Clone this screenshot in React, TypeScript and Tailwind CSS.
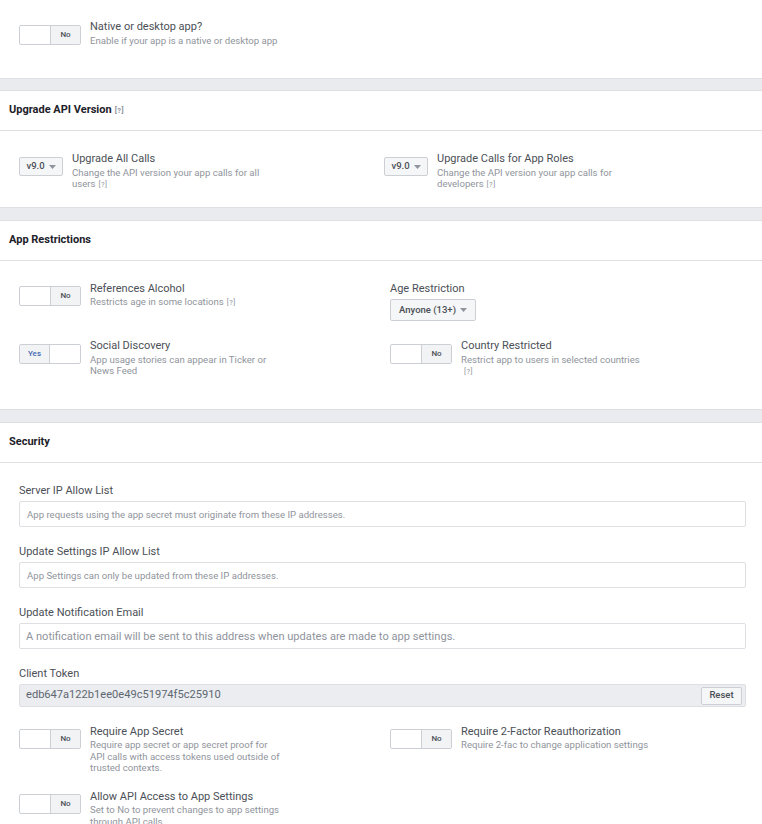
import React from "react";

function Toggle({ on }: { on?: boolean }) {
  return (
    <div className="flex h-[20px] w-[62px] shrink-0 overflow-hidden rounded-[2px] border border-[#ccd0d5] bg-white">
      {on ? (
        <>
          <div className="flex w-1/2 items-center justify-center border-r border-[#ccd0d5] bg-[#f2f3f5] text-[8px] font-medium text-[#4267b2]">
            Yes
          </div>
          <div className="w-1/2" />
        </>
      ) : (
        <>
          <div className="w-1/2" />
          <div className="flex w-1/2 items-center justify-center border-l border-[#ccd0d5] bg-[#f2f3f5] text-[8px] font-medium text-[#4b4f56]">
            No
          </div>
        </>
      )}
    </div>
  );
}

function Q() {
  return <span className="ml-[3px] inline-block text-[7.5px] leading-[10px] tracking-[0.5px] text-[#90949c]">[?]</span>;
}

function Arrow() {
  return (
    <svg width="7" height="4" viewBox="0 0 7 4" className="ml-[4px]">
      <path d="M0 0 L7 0 L3.5 4 Z" fill="#90949c" />
    </svg>
  );
}

function Dropdown({ label, w, h }: { label: string; w: string; h: string }) {
  return (
    <div
      className={`flex shrink-0 items-center justify-center rounded-[2px] border border-[#ccd0d5] bg-[#f5f6f7] text-[9.5px] font-medium text-[#4b4f56] ${w} ${h}`}
    >
      {label}
      <Arrow />
    </div>
  );
}

function ToggleItem({
  on,
  title,
  sub,
}: {
  on?: boolean;
  title: string;
  sub: React.ReactNode;
}) {
  return (
    <div className="flex items-start gap-[9px]">
      <div className="mt-[4.5px]">
        <Toggle on={on} />
      </div>
      <div className="w-[190px]">
        <div className="text-[11px] leading-[13px] text-[#4b4f56]">{title}</div>
        <div className="mt-[1.5px] text-[9.6px] leading-[11.5px] text-[#90949c]">{sub}</div>
      </div>
    </div>
  );
}

function VersionItem({ title, sub }: { title: string; sub: React.ReactNode }) {
  return (
    <div className="flex items-start gap-[9px]">
      <div className="mt-[5px]">
        <Dropdown label="v9.0" w="w-[44px]" h="h-[19px]" />
      </div>
      <div className="w-[190px]">
        <div className="text-[11px] leading-[13px] text-[#4b4f56]">{title}</div>
        <div className="mt-[1.5px] text-[9.6px] leading-[11.5px] text-[#90949c]">{sub}</div>
      </div>
    </div>
  );
}

function Band() {
  return <div className="h-[13.5px] border-y border-[#dddfe2] bg-[#e9ebee]" />;
}

function Header({ children }: { children: React.ReactNode }) {
  return (
    <div className="flex h-[40px] items-center border-b border-[#dddfe2] pl-[9px] text-[11px] font-bold text-[#1d2129]">
      {children}
    </div>
  );
}

function Field({ label, children }: { label: string; children: React.ReactNode }) {
  return (
    <div className="flex flex-col">
      <div className="text-[11px] leading-[13px] text-[#4b4f56]">{label}</div>
      <div className="mt-[4px]">{children}</div>
    </div>
  );
}

export default function App() {
  return (
    <div className="min-h-screen w-[762px] overflow-hidden bg-white font-['Roboto','Liberation_Sans',sans-serif]">
      {/* Section 0 */}
      <div className="pb-[31.5px] pl-[19px] pt-[20px]">
        <ToggleItem title="Native or desktop app?" sub="Enable if your app is a native or desktop app" />
      </div>
      <Band />

      {/* Upgrade API Version */}
      <Header>
        Upgrade API Version
        <Q />
      </Header>
      <div className="grid grid-cols-[365px_1fr] pb-[17px] pl-[19px] pt-[21px]">
        <VersionItem
          title="Upgrade All Calls"
          sub={
            <>
              Change the API version your app calls for all users
              <Q />
            </>
          }
        />
        <VersionItem
          title="Upgrade Calls for App Roles"
          sub={
            <>
              Change the API version your app calls for developers
              <Q />
            </>
          }
        />
      </div>
      <Band />

      {/* App Restrictions */}
      <Header>App Restrictions</Header>
      <div className="grid grid-cols-[371px_1fr] gap-y-[18px] pb-[32px] pl-[19px] pt-[21px]">
        <ToggleItem
          title="References Alcohol"
          sub={
            <>
              Restricts age in some locations
              <Q />
            </>
          }
        />
        <div className="flex flex-col items-start">
          <div className="text-[11px] leading-[13px] text-[#4b4f56]">Age Restriction</div>
          <div className="mt-[4.5px]">
            <Dropdown label="Anyone (13+)" w="w-[86px]" h="h-[22px]" />
          </div>
        </div>
        <ToggleItem on title="Social Discovery" sub="App usage stories can appear in Ticker or News Feed" />
        <ToggleItem
          title="Country Restricted"
          sub={
            <>
              Restrict app to users in selected countries
              <Q />
            </>
          }
        />
      </div>
      <Band />

      {/* Security */}
      <Header>Security</Header>
      <div className="flex flex-col pl-[19px] pr-[16px] pt-[21.5px]">
        <div className="flex flex-col gap-[18px]">
          <Field label="Server IP Allow List">
            <input
              className="block h-[26px] w-full rounded-[2px] border border-[#dddfe2] bg-white px-[7px] text-[9.6px] text-[#4b4f56] outline-none placeholder:text-[#90949c]"
              placeholder="App requests using the app secret must originate from these IP addresses."
            />
          </Field>
          <Field label="Update Settings IP Allow List">
            <input
              className="block h-[26px] w-full rounded-[2px] border border-[#dddfe2] bg-white px-[7px] text-[9.6px] text-[#4b4f56] outline-none placeholder:text-[#90949c]"
              placeholder="App Settings can only be updated from these IP addresses."
            />
          </Field>
          <Field label="Update Notification Email">
            <input
              className="block h-[26px] w-full rounded-[2px] border border-[#dddfe2] bg-white px-[6px] text-[11.1px] text-[#4b4f56] outline-none placeholder:text-[#90949c]"
              placeholder="A notification email will be sent to this address when updates are made to app settings."
            />
          </Field>
          <Field label="Client Token">
            <div className="flex h-[23px] w-full items-center justify-between rounded-[2px] border border-[#dddfe2] bg-[#ebedf0] pl-[6px] pr-[3px]">
              <span className="text-[11.1px] text-[#606770]">edb647a122b1ee0e49c51974f5c25910</span>
              <button className="flex h-[18px] w-[41px] items-center justify-center rounded-[2px] border border-[#ccd0d5] bg-[#f5f6f7] text-[9.5px] font-medium text-[#4b4f56]">
                Reset
              </button>
            </div>
          </Field>
        </div>
        <div className="mt-[17.5px] grid grid-cols-[371px_1fr] gap-y-[16px] pb-[20px]">
          <ToggleItem
            title="Require App Secret"
            sub="Require app secret or app secret proof for API calls with access tokens used outside of trusted contexts."
          />
          <ToggleItem title="Require 2-Factor Reauthorization" sub="Require 2-fac to change application settings" />
          <ToggleItem
            title="Allow API Access to App Settings"
            sub="Set to No to prevent changes to app settings through API calls"
          />
        </div>
      </div>
    </div>
  );
}
